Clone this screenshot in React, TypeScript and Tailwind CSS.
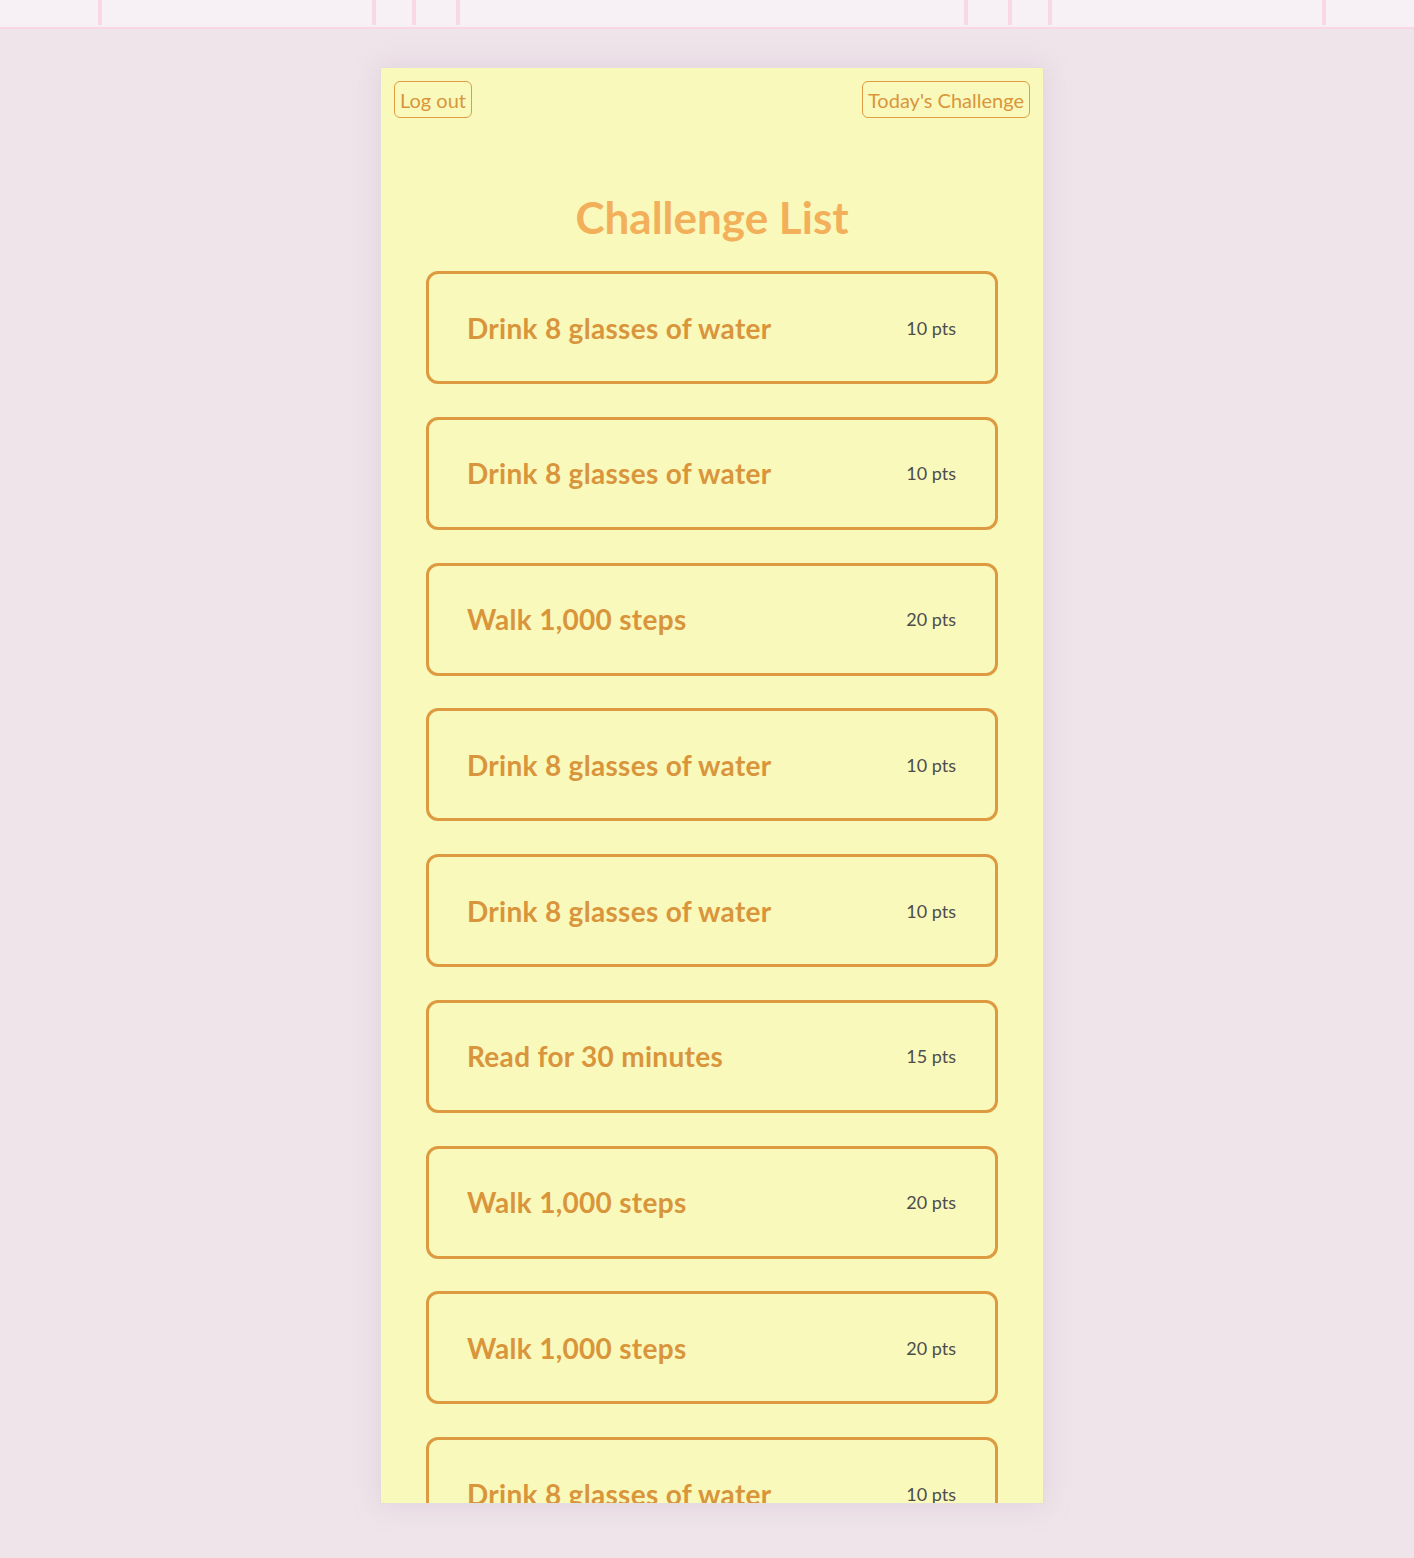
import React from "react";

type Challenge = {
  title: string;
  points: number;
};

const challenges: Challenge[] = [
  { title: "Drink 8 glasses of water", points: 10 },
  { title: "Drink 8 glasses of water", points: 10 },
  { title: "Walk 1,000 steps", points: 20 },
  { title: "Drink 8 glasses of water", points: 10 },
  { title: "Drink 8 glasses of water", points: 10 },
  { title: "Read for 30 minutes", points: 15 },
  { title: "Walk 1,000 steps", points: 20 },
  { title: "Walk 1,000 steps", points: 20 },
  { title: "Drink 8 glasses of water", points: 10 },
  { title: "Read for 30 minutes", points: 15 },
];

// gaps between the thin pink separators in the top bar
const segments = [98, 270, 36, 40, 504, 40, 36, 270];

const TopBar = () => (
  <div className="flex h-[29px] bg-[#f7f0f4] border-b-2 border-[#f8d6e2]">
    {segments.map((w, i) => (
      <React.Fragment key={i}>
        <div style={{ width: w }} />
        <div className="w-[4px] h-[25px] bg-[#f9d8e3]" />
      </React.Fragment>
    ))}
    <div className="flex-1" />
  </div>
);

const ChallengeCard = ({ title, points }: Challenge) => (
  <li className="flex items-center justify-between h-[113px] pl-[38px] pr-[39px] border-[3px] border-[#dd9a40] rounded-[12px]">
    <h3 className="text-[28px] font-bold text-[#d9953c] leading-none tracking-[0.3px]">{title}</h3>
    <span className="text-[18px] text-[#4d4d4d] leading-none">{points} pts</span>
  </li>
);

export default function App() {
  return (
    <div
      className="min-h-[1558px] bg-[#efe4ea]"
      style={{ fontFamily: "Lato, 'Open Sans', sans-serif" }}
    >
      <TopBar />
      <div className="flex justify-center pt-[38px] pl-[10px]">
        <div className="w-[664px] h-[1437px] overflow-hidden bg-[#f9f9bb] border border-[#e3dde0] shadow-[0_0_24px_rgba(200,170,190,0.35)] px-[13px] pt-[13px]">
          <div className="flex justify-between">
            <button className="h-[37px] px-[5px] border-[1.5px] border-[#df9d45] rounded-[6px] text-[20px] text-[#d9953c] leading-none">
              Log out
            </button>
            <button className="h-[37px] px-[5px] border-[1.5px] border-[#df9d45] rounded-[6px] text-[20px] text-[#d9953c] leading-none">
              Today's Challenge
            </button>
          </div>
          <h1 className="mt-[77px] text-center text-[44px] font-bold text-[#f2b05b] leading-none">
            Challenge List
          </h1>
          <ul className="mt-[32px] mx-[32px] flex flex-col gap-[32.75px]">
            {challenges.map((c, i) => (
              <ChallengeCard key={i} title={c.title} points={c.points} />
            ))}
          </ul>
        </div>
      </div>
    </div>
  );
}
